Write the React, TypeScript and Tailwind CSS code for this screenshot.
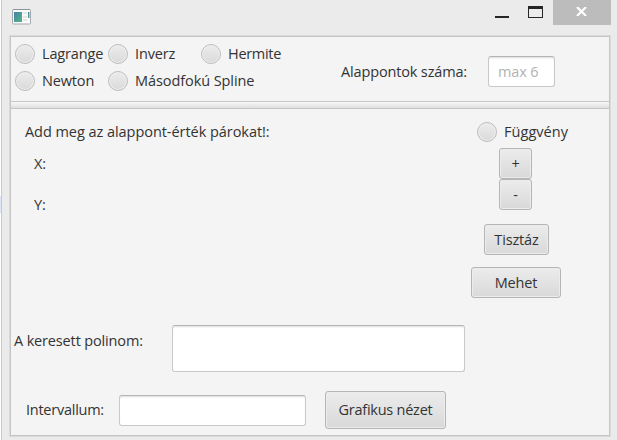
import type { ReactNode } from "react";

const text = "whitespace-nowrap leading-[20px]";

function Radio({ label, className = "" }: { label: string; className?: string }) {
  return (
    <div className={`flex h-5 items-center ${className}`}>
      <span className="size-5 shrink-0 rounded-full border border-[#bdbdbd] bg-linear-to-b from-[#ececec] to-[#dadada] shadow-[inset_0_0_0_1px_#f0f0f0]" />
      <span className={`ml-[7px] ${text}`}>{label}</span>
    </div>
  );
}

function Button({ children, className }: { children: ReactNode; className: string }) {
  return (
    <button
      className={`flex shrink-0 items-center justify-center rounded-[3px] border border-[#b5b5b5] bg-linear-to-b from-[#ececec] to-[#d9d9d9] shadow-[inset_0_0_0_1px_#ececec] ${text} ${className}`}
    >
      {children}
    </button>
  );
}

const field =
  "shrink-0 rounded-[3px] border border-[#c8c8c8] border-t-[#b4b4b4] bg-white shadow-[inset_0_2px_2px_-1px_#dedede] outline-none";

function TitleBar() {
  return (
    <header className="flex h-[35px] items-start pl-[10px]">
      <svg className="mt-[9px]" width="19" height="16" viewBox="0 0 19 16">
        <defs>
          <linearGradient id="pane" x1="0" y1="0" x2="1" y2="1">
            <stop offset="0" stopColor="#4682a8" />
            <stop offset="1" stopColor="#55b585" />
          </linearGradient>
        </defs>
        <rect x=".5" y=".5" width="18" height="14.5" rx="1" fill="#fafafa" stroke="#a4a9ae" />
        <path d="M1 .5h17" stroke="#8a929c" />
        <rect x="2" y="3" width="8" height="10" fill="url(#pane)" />
        <path d="M11 4h4M11 8h4M11 11h4" stroke="#e5e5e5" strokeWidth="2" />
        <rect x="16" y="3" width="1.5" height="6" fill="url(#pane)" />
      </svg>
      <div className="mr-[6px] ml-auto flex items-start">
        <span className="mt-4 h-[2px] w-[14px] bg-[#262626]" />
        <span className="mt-[6px] ml-[19px] h-3 w-[15px] border border-t-[3px] border-[#262626]" />
        <span className="ml-[10px] flex h-[25px] w-[58px] justify-center bg-[#bcbcbc]">
          <svg className="mt-[7px] -ml-px" width="11" height="9" viewBox="0 0 11 9">
            <path d="M1 0l9 9M10 0L1 9" stroke="white" strokeWidth="2.2" />
          </svg>
        </span>
      </div>
    </header>
  );
}

export default function App() {
  return (
    <div className="flex h-[440px] w-[617px] overflow-hidden bg-[#ebebeb] font-['Open_Sans','Noto_Sans',sans-serif] text-[14.5px] tracking-[-0.15px] text-[#333]">
      <div className="w-px bg-white pt-[196px]">
        <div className="h-[17px] bg-[#dce6f5]" />
      </div>
      <div className="w-px bg-[#c9c9c9]" />
      <div className="flex w-[615px] flex-col">
        <TitleBar />
        <main className="ml-[7px] h-[402px] w-[602px] border border-[#dadada]">
          <div className="h-[400px] border border-[#c6c6c6] bg-[#f4f4f4]">
            <section className="flex h-16 pl-1">
              <div className="mt-[7px] grid w-[326px] grid-cols-[93px_93px_1fr] content-start gap-y-[7px]">
                <Radio label="Lagrange" />
                <Radio label="Inverz" />
                <Radio label="Hermite" className="tracking-[-0.3px]" />
                <Radio label="Newton" />
                <Radio label="Másodfokú Spline" className="col-span-2 tracking-[-0.08px]" />
              </div>
              <span className={`mt-[25px] w-[147px] ${text}`}>Alappontok száma:</span>
              <input
                className={`mt-[19px] h-[31px] w-[67px] pb-px pl-[9px] placeholder:text-[#b2b2b2] ${field}`}
                placeholder="max 6"
              />
            </section>
            <div className="h-2 border-y border-[#c6c6c6] bg-linear-to-b from-[#f8f8f8] to-[#dedede]" />
            <section>
              <div className="flex h-[216px]">
                <div className="w-[460px] pt-[13px] pl-[14px]">
                  <p className={`tracking-[-0.05px] ${text}`}>Add meg az alappont-érték párokat!:</p>
                  <p className={`mt-3 ml-[9px] ${text}`}>X:</p>
                  <p className={`mt-[21px] ml-[9px] ${text}`}>Y:</p>
                </div>
                <div className="w-[110px] pt-[13px]">
                  <Radio label="Függvény" className="ml-[6px] tracking-[0.05px]" />
                  <Button className="mt-[6px] ml-7 h-[31px] w-[33px]">+</Button>
                  <Button className="ml-7 h-[31px] w-[33px]">-</Button>
                  <Button className="mt-[14px] ml-[13px] h-[31px] w-[65px]">Tisztáz</Button>
                  <Button className="mt-3 h-[31px] w-[90px]">Mehet</Button>
                </div>
              </div>
              <div className="flex h-[47px] pl-[3px]">
                <span className={`mt-[6px] w-[158px] ${text}`}>A keresett polinom:</span>
                <textarea className={`h-[47px] w-[293px] resize-none ${field}`} />
              </div>
              <div className="mt-[19px] flex h-[38px] items-center pl-[15px]">
                <span className={`w-[93px] tracking-[-0.25px] ${text}`}>Intervallum:</span>
                <input className={`h-[31px] w-[187px] ${field}`} />
                <Button className="ml-[19px] h-[38px] w-[121px] tracking-[-0.25px]">Grafikus nézet</Button>
              </div>
            </section>
          </div>
        </main>
      </div>
    </div>
  );
}
